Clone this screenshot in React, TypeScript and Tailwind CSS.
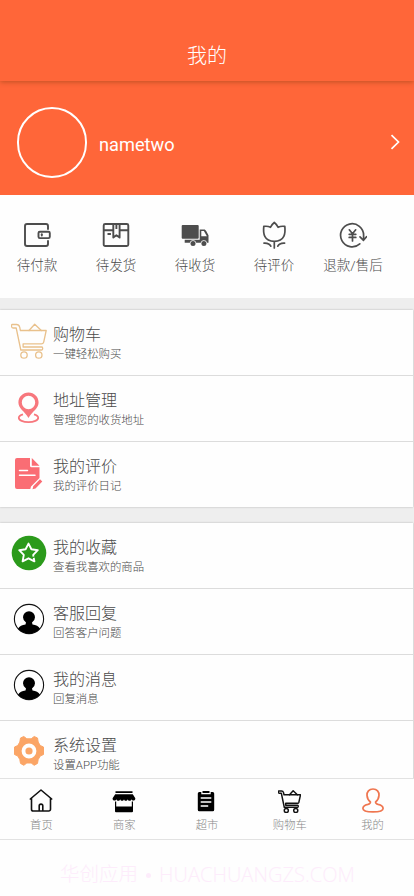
import type { ReactNode } from 'react'

const CJK = "font-['Roboto','Noto_Sans_CJK_SC',sans-serif]"

function WalletIcon() {
  return (
    <svg width="28" height="26" viewBox="0 0 28 26" fill="none" stroke="#4d4d4d" strokeWidth="1.9" strokeLinecap="round">
      <path d="M25 7V4a2 2 0 0 0-2-2H4a2 2 0 0 0-2 2v18a2 2 0 0 0 2 2h19a2 2 0 0 0 2-2v-3" />
      <rect x="15.5" y="9.7" width="11.3" height="6.4" rx="1.3" />
      <path d="M18.8 12.2v1.4" />
    </svg>
  )
}

function PackageIcon() {
  return (
    <svg width="28" height="26" viewBox="0 0 28 26" fill="none" stroke="#4d4d4d" strokeWidth="1.9" strokeLinejoin="round">
      <rect x="1.7" y="2" width="24.6" height="22" rx="1.5" />
      <path d="M1.7 8.2h9.600M17.600 8.200h8.700M11.300 2v13.600l3.100-2.300 3.200 2.300V2M14.400 2v5M5.500 12h3.400" />
    </svg>
  )
}

function TruckIcon() {
  return (
    <svg width="28" height="26" viewBox="0 0 28 26" fill="#4d4d4d">
      <rect x="0.7" y="3" width="17" height="13.700" rx="1" />
      <path d="M18.700 7.500h4.300c1.200 0 1.600.6 2.200 1.600l2.300 4.200v7.400h-1.400a3.300 3.300 0 0 0-6.400 0h-4.500a3.300 3.300 0 0 0-6.400 0H3.700v-2.900h15zM20.300 9.100v5.200h5.600l-2.600-4.600c-.3-.5-.5-.6-1-.6z" fillRule="evenodd" />
      <circle cx="12" cy="21.600" r="2.500" />
      <circle cx="22.900" cy="21.600" r="2.500" />
    </svg>
  )
}

function TulipIcon() {
  return (
    <svg width="28" height="28" viewBox="0 0 28 28" fill="none" stroke="#4d4d4d" strokeWidth="1.7" strokeLinecap="round" strokeLinejoin="round">
      <path d="M14.300 1.500c-2 1.600-3.200 3.200-3.800 4.800C8.800 5.400 6.400 5 3.800 5.400 3 12.300 3.800 20 14.300 20.300 24.800 20 25.600 12.300 24.800 5.400c-2.600-.4-5 0-6.700.9-.6-1.600-1.800-3.200-3.800-4.800zM14.300 20.600V27M4 22.200c3.400-.2 5.800.9 6.800 3M24.600 22.200c-3.400-.2-5.800.9-6.800 3" />
    </svg>
  )
}

function RefundIcon() {
  return (
    <svg className="-mt-px" width="28" height="28" viewBox="0 0 28 28" fill="none" stroke="#4d4d4d" strokeWidth="1.700" strokeLinecap="round" strokeLinejoin="round">
      <path d="M20.800 22.800A11.500 11.500 0 1 1 24.600 14.500v4.200M21 15.800l3.500 3.500 3-3.600" />
      <path d="M10.300 8.800l3.200 4 3.200-4M13.500 13v7M10.200 13.300h6.600M10.200 16.400h6.600" />
    </svg>
  )
}

// Shared by the list row and the tab bar
function CartIcon({ size, stroke, color }: { size: number; stroke: number; color: string }) {
  return (
    <svg width={size} height={size} viewBox="0 0 36 36" fill="none" stroke={color} strokeWidth={stroke} strokeLinecap="round" strokeLinejoin="round">
      <path d="M1 1.500h4.500c2 0 2.700.8 3.200 2.600l.7 3.400h25.800l-2.500 11.600c-.3 1.100-1 1.700-2.300 1.700H12.100v3.200h18.700c1.200 0 1.200 3 0 3H9.800L5.200 5H2.200C.4 5 0 2.500 1 1.500z" />
      <path d="M18 7.500L23.700 1.200l6.600 6.300" />
      <circle cx="13" cy="32" r="3.200" />
      <circle cx="27.800" cy="32" r="3.200" />
    </svg>
  )
}

function PinIcon() {
  return (
    <svg className="mt-[3px]" width="24" height="32" viewBox="0 0 24 32">
      <path d="M6 22.300c-2.900.8-4.200 2-4.200 3.500 0 2.500 4.300 4.400 9.700 4.400s9.700-1.900 9.700-4.400c0-1.500-1.300-2.700-4.200-3.500" fill="none" stroke="#f7777d" strokeWidth="1.800" />
      <path d="M11.500.6C5.800.6 1.400 5 1.400 10.500c0 6 6 8.500 10.100 15.500 4.100-7 10.100-9.500 10.100-15.500C21.600 5 17.200.6 11.500.6zm0 3.200a6.700 6.700 0 1 1 0 13.400 6.700 6.700 0 0 1 0-13.400z" fill="#f7777d" fillRule="evenodd" />
    </svg>
  )
}

function NoteIcon() {
  return (
    <svg className="mt-[3px]" width="30" height="34" viewBox="0 0 30 34">
      <path d="M3 1h13v7.700a1.500 1.500 0 0 0 1.500 1.500h8V21L17 29.500l-.7 2.500H3a2 2 0 0 1-2-2V3a2 2 0 0 1 2-2zM17.800 1l7.700 7.700h-7.700zM19.200 29.200l6.800-7 2.300 2.200-6.800 7-3 .8z" fill="#fa6d74" />
      <path d="M5.500 13.500h8M5.500 18.300h15.500" stroke="#fff" strokeWidth="1.500" strokeLinecap="round" />
    </svg>
  )
}

function FavoriteIcon() {
  return (
    <svg className="-mt-[2px]" width="36" height="36" viewBox="0 0 36 36">
      <circle cx="18" cy="18" r="17.300" fill="#2b9a1b" />
      <path d="M17.500 8.600l2.900 5.700 6.400.9-4.600 4.600 1.200 6.500-5.900-3-5.900 3 1.200-6.500-4.600-4.600 6.400-.9z" fill="none" stroke="#fff" strokeWidth="1.900" strokeLinejoin="round" />
      <path d="M21 22.700l4-1" stroke="#2b9a1b" strokeWidth="1.300" />
    </svg>
  )
}

function PersonIcon() {
  return (
    <svg className="-mt-[2px]" width="32" height="32" viewBox="0 0 32 32">
      <circle cx="16" cy="16" r="14.600" fill="#fff" stroke="#111" strokeWidth="1.100" />
      <path d="M5 25.800c1.500-2.900 4-3.800 7.500-4.400l.5-2A6.200 6.200 0 0 1 10 14.200a6 6 0 0 1 12 0 6.200 6.200 0 0 1-3 5.200l.5 2c3.500.6 6 1.500 7.500 4.400A14.600 14.600 0 0 1 16 30.600 14.600 14.600 0 0 1 5 25.800z" fill="#000" />
    </svg>
  )
}

function GearIcon() {
  return (
    <svg className="-mt-[2px]" width="32" height="32" viewBox="0 0 32 32">
      <path
        d="M7.500 3L10.800 1.500l3 2.300h4.400l3-2.300L24.500 3l.7 4.100 2 3.400 3.300 1.500v7.500l-3.300 1.500-2 3.500-.7 3.900-3.300 1.900-3-2.300h-4.400l-3 2.300-3.300-1.900-.7-3.900-2-3.500-3.300-1.500V12l3.300-1.500 2-3.400z"
        fill="#fba566" stroke="#fba566" strokeLinejoin="round"
      />
      <circle cx="16" cy="16" r="5.500" fill="#fba566" stroke="#fff" strokeWidth="3.800" />
    </svg>
  )
}

function HomeIcon() {
  return (
    <svg width="26" height="26" viewBox="0 0 26 26" fill="none" stroke="#111" strokeWidth="1.600" strokeLinecap="round" strokeLinejoin="round">
      <path d="M2.300 11L13 2l10.700 9M3.500 10.200v11a1.800 1.800 0 0 0 1.800 1.800h15.400a1.800 1.800 0 0 0 1.800-1.800v-11M11.200 22.800v-5c0-2.300 3.600-2.300 3.600 0v5" />
    </svg>
  )
}

function ShopIcon() {
  return (
    <svg width="26" height="26" viewBox="0 0 26 26">
      <path d="M4.500 3.300h17v1.700h-17zM4.200 6.300h17.600l2.500 4c.4 2.700-3.300 3-3.800 1-.6 2-3.200 2-3.800 0-.6 2-3.200 2-3.700 0-.6 2-3.200 2-3.800 0-.6 2-3.200 2-3.700 0-.6 2-4.300 1.700-3.900-1zM4 13.500h1.200v5h15.600v-5H22v9.800a1 1 0 0 1-1 1H5a1 1 0 0 1-1-1z" fill="#000" />
    </svg>
  )
}

function ClipboardIcon() {
  return (
    <svg width="26" height="26" viewBox="0 0 26 26">
      <path d="M5.300 4h2v2.300h9.400V4h2a1.500 1.500 0 0 1 1.500 1.500v16.300a1.500 1.500 0 0 1-1.500 1.500H5.300a1.500 1.500 0 0 1-1.500-1.500V5.500A1.500 1.500 0 0 1 5.300 4zM8.500 3h7v2h-7z" fill="#000" />
      <path d="M6.700 10h10.600M6.700 14h10.600M6.700 18h7.500" stroke="#fff" strokeWidth="1.400" />
    </svg>
  )
}

function MineIcon() {
  return (
    <svg width="26" height="26" viewBox="0 0 26 26" fill="none" stroke="#ef7650" strokeWidth="1.700" strokeLinejoin="round">
      <path d="M13 1c-4 0-6.200 2.800-6 6.400.2 2.700 1.500 5 3.400 6.500.2 1.500-.6 2-2.500 2.500-3 .7-5 1.700-5 4.100 0 2.200 3 3.400 10.100 3.400s10.100-1.200 10.100-3.400c0-2.400-2-3.400-5-4.100-1.900-.5-2.700-1-2.500-2.500 1.900-1.500 3.200-3.800 3.400-6.500C19.200 3.800 17 1 13 1z" />
    </svg>
  )
}

const ORDERS: { label: string; icon: ReactNode }[] = [
  { label: '待付款', icon: <WalletIcon /> },
  { label: '待发货', icon: <PackageIcon /> },
  { label: '待收货', icon: <TruckIcon /> },
  { label: '待评价', icon: <TulipIcon /> },
  { label: '退款/售后', icon: <RefundIcon /> },
]

type MenuItem = { title: string; desc: string; icon: ReactNode }

const SHOPPING: MenuItem[] = [
  { title: '购物车', desc: '一键轻松购买', icon: <CartIcon size={36} stroke={1.3} color="#e9c18c" /> },
  { title: '地址管理', desc: '管理您的收货地址', icon: <PinIcon /> },
  { title: '我的评价', desc: '我的评价日记', icon: <NoteIcon /> },
]

const SERVICES: MenuItem[] = [
  { title: '我的收藏', desc: '查看我喜欢的商品', icon: <FavoriteIcon /> },
  { title: '客服回复', desc: '回答客户问题', icon: <PersonIcon /> },
  { title: '我的消息', desc: '回复消息', icon: <PersonIcon /> },
  { title: '系统设置', desc: '设置APP功能', icon: <GearIcon /> },
]

const TABS = [
  { label: '首页', icon: <HomeIcon /> },
  { label: '商家', icon: <ShopIcon /> },
  { label: '超市', icon: <ClipboardIcon /> },
  { label: '购物车', icon: <CartIcon size={23} stroke={2.3} color="#111" /> },
  { label: '我的', icon: <MineIcon /> },
]

function MenuGroup({ items }: { items: MenuItem[] }) {
  return (
    <div className="mr-px shrink-0 bg-[#fefefe] shadow-[0_0_2px_rgba(0,0,0,.25)]">
      {items.map((item) => (
        <div key={item.title} className="flex h-[66px] border-b border-[#dcdcdc] pl-[11px] last:h-[65px] last:border-b-0">
          <div className="flex h-[61px] w-9 items-center justify-center">{item.icon}</div>
          <div className="pt-[13px] pl-1.5">
            <div className="text-[16px] leading-6 text-[#4a4a4a]">{item.title}</div>
            <div className="text-[11.400px] leading-[14px] text-[#4a4a4a]">{item.desc}</div>
          </div>
        </div>
      ))}
    </div>
  )
}

export default function App() {
  return (
    <div className={`flex h-[896px] w-[414px] flex-col overflow-hidden bg-[#fefefe] font-light ${CJK}`}>
      <header className="relative h-[81px] shrink-0 bg-[#ff6639] pt-[41px] text-center text-[20px] leading-[30px] text-white shadow-[0_1px_5px_rgba(90,50,0,.4)]">
        我的
      </header>

      {/* profile */}
      <div className="flex h-[114px] shrink-0 items-center bg-[#ff6639] pr-3.5 pl-[17px]">
        <div className="mt-2 h-[71px] w-[70px] rounded-full border-[2.500px] border-white" />
        <div className="mt-[13px] ml-3 flex-1 text-[18.200px] font-normal text-white">nametwo</div>
        <svg className="mt-2" width="10" height="16" viewBox="0 0 10 16" fill="none" stroke="#fff" strokeWidth="1.700">
          <path d="M1.500 1.200L8.500 8l-7 6.800" />
        </svg>
      </div>

      {/* order shortcuts */}
      <div className="-ml-[2.500px] flex h-[103px] w-[417px] shrink-0 bg-[#fefefe] pt-[26px]">
        {ORDERS.map((o) => (
          <div key={o.label} className="flex w-[79px] shrink-0 flex-col items-center">
            <div className="flex h-7 items-center">{o.icon}</div>
            <div className="mt-1.5 text-[13.500px] leading-5 whitespace-nowrap text-[#4a4a4a]">{o.label}</div>
          </div>
        ))}
      </div>

      <main className="flex h-[480px] shrink-0 flex-col gap-4 overflow-hidden bg-[#eee] pt-3">
        <MenuGroup items={SHOPPING} />
        <MenuGroup items={SERVICES} />
      </main>

      <nav className="relative grid h-[62px] shrink-0 grid-cols-5 border-y border-[#e2e2e2] bg-[#fefefe] pt-[9px]">
        {TABS.map((t) => (
          <div key={t.label} className="flex flex-col items-center">
            <div className="flex h-[26px] items-center">{t.icon}</div>
            <div className="mt-1 text-[11.300px] leading-4 text-[#888]">{t.label}</div>
          </div>
        ))}
      </nav>

      <footer className="flex pt-5 pl-[60px] text-[19.500px] leading-[30px] whitespace-nowrap text-[#fdecfb]">
        <span>华创应用</span>
        <span className="flex w-[21px] items-center justify-center">
          <i className="size-[5px] rounded-full bg-[#fdecfb]" />
        </span>
        <span className="font-['Open_Sans',sans-serif] text-[20.100px]">HUACHUANGZS.COM</span>
      </footer>
    </div>
  )
}
